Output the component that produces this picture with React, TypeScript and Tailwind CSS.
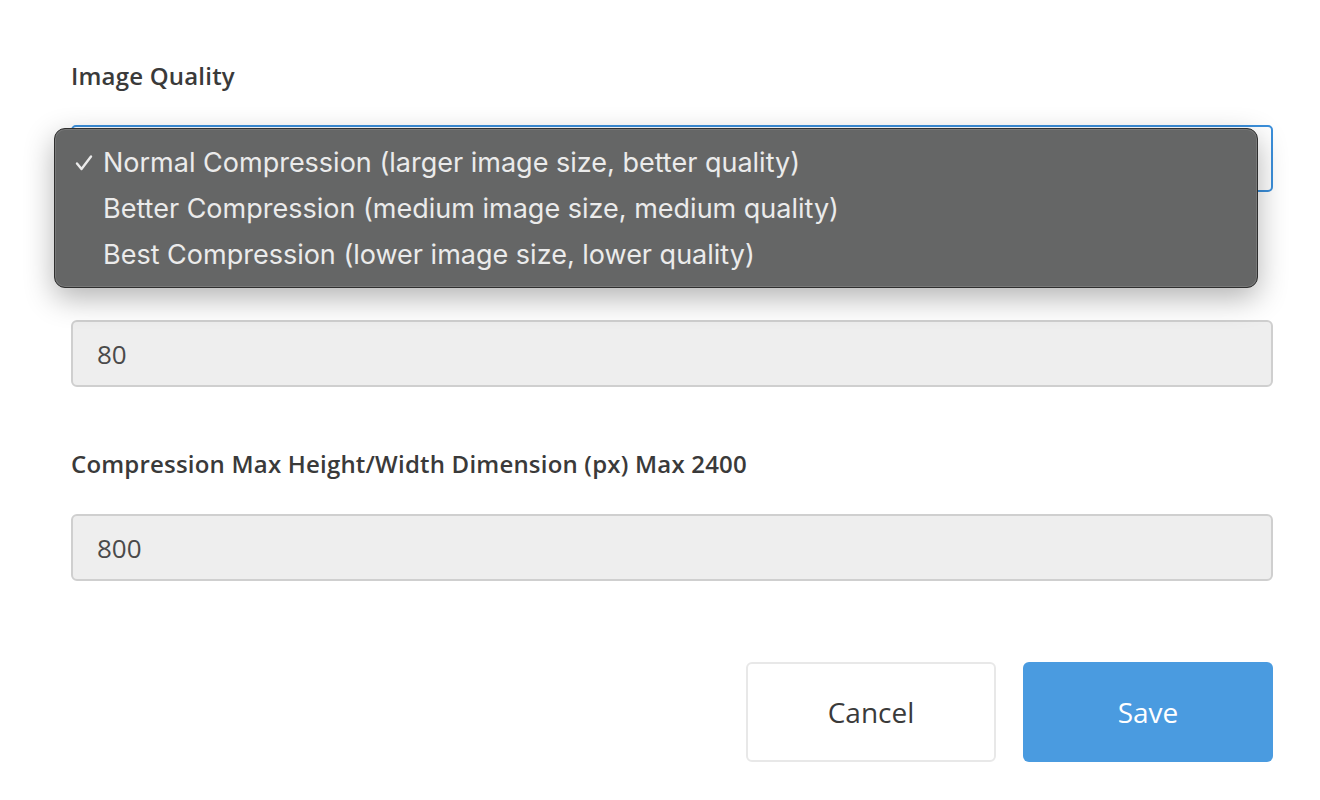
import React from "react";

const labelCls =
  "block h-[30px] text-[24px] leading-[30px] font-semibold tracking-[0.2px] text-[#3a3a3a] [font-family:'Open_Sans',sans-serif]";
const inputCls =
  "h-[67px] w-full rounded-[6px] border-2 border-[#cfcfcf] bg-[#eeeeee] px-[24px] text-[26px] text-[#4a4a4a] [font-family:'Open_Sans',sans-serif] outline-none";

const options = [
  "Normal Compression (larger image size, better quality)",
  "Better Compression (medium image size, medium quality)",
  "Best Compression (lower image size, lower quality)",
];

export default function App() {
  return (
    <div className="relative h-[800px] w-[1320px] overflow-hidden bg-white">
      <div className="ml-[71px] w-[1202px] pt-[61px]">
        <label className={labelCls}>Image Quality</label>
        <div className="mt-[34px] h-[67px] w-full rounded-[5px] border-2 border-[#3b8fdb] bg-white" />

        <label className={`${labelCls} mt-[63px]`}>Compression Quality (0-100)</label>
        <div className="mt-[35px]">
          <input readOnly value="80" className={inputCls} />
        </div>

        <label className={`${labelCls} mt-[62px]`}>
          Compression Max Height/Width Dimension (px) Max 2400
        </label>
        <div className="mt-[35px]">
          <input readOnly value="800" className={inputCls} />
        </div>

        <div className="mt-[81px] flex justify-end gap-[27px]">
          <button className="h-[100px] w-[250px] rounded-[6px] border-2 border-[#e8e8e8] bg-white text-[28px] text-[#3a3a3a] [font-family:'Open_Sans',sans-serif]">
            Cancel
          </button>
          <button className="h-[100px] w-[250px] rounded-[6px] bg-[#4a9be0] text-[28px] text-white [font-family:'Open_Sans',sans-serif]">
            Save
          </button>
        </div>
      </div>

      {/* open select menu */}
      <div className="absolute left-[54px] top-[128px] w-[1204px] rounded-[11px] border border-[#2f2f2f] bg-[#656666] pt-[11px] pb-[9px] shadow-[0_10px_30px_rgba(0,0,0,0.3),inset_0_0_0_1px_rgba(255,255,255,0.12)]">
        {options.map((o, i) => (
          <div
            key={o}
            className="flex h-[46px] items-center text-[27px] text-[#ebebeb] [font-family:Inter,sans-serif]"
          >
            <span className="flex w-[48px] justify-end pr-[10px]">
              {i === 0 && (
                <svg width="18" height="18" viewBox="0 0 18 18" fill="none">
                  <path
                    d="M2 9.5 L6.5 15 L16 2.5"
                    stroke="#ebebeb"
                    strokeWidth="2.4"
                    strokeLinecap="round"
                    strokeLinejoin="round"
                  />
                </svg>
              )}
            </span>
            <span>{o}</span>
          </div>
        ))}
      </div>
    </div>
  );
}
